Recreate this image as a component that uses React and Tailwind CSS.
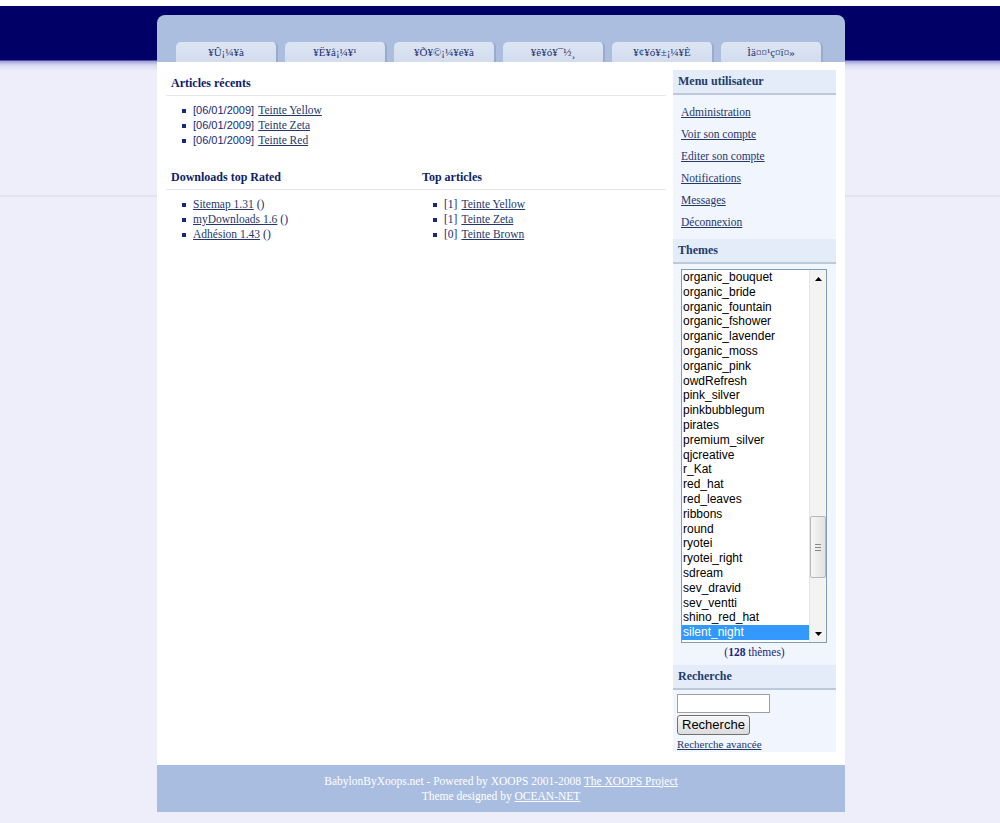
import React from 'react'

const tabs = ['¥Û¡¼¥à', '¥Ë¥å¡¼¥¹', '¥Õ¥©¡¼¥é¥à', '¥ê¥ó¥¯½¸', '¥¢¥ó¥±¡¼¥È', 'Ìä¤¤¹ç¤ï¤»']

const recent = ['Teinte Yellow', 'Teinte Zeta', 'Teinte Red']
const downloads = ['Sitemap 1.31', 'myDownloads 1.6', 'Adhésion 1.43']
const topArticles = [['1', 'Teinte Yellow'], ['1', 'Teinte Zeta'], ['0', 'Teinte Brown']]
const userMenu = ['Administration', 'Voir son compte', 'Editer son compte', 'Notifications', 'Messages', 'Déconnexion']
const themes = [
  'organic_bouquet', 'organic_bride', 'organic_fountain', 'organic_fshower', 'organic_lavender',
  'organic_moss', 'organic_pink', 'owdRefresh', 'pink_silver', 'pinkbubblegum', 'pirates',
  'premium_silver', 'qjcreative', 'r_Kat', 'red_hat', 'red_leaves', 'ribbons', 'round', 'ryotei',
  'ryotei_right', 'sdream', 'sev_dravid', 'sev_ventti', 'shino_red_hat', 'silent_night',
]

const serif = "font-['Liberation_Serif','DejaVu_Serif',serif]"

const Bullet = () => <span className="mr-[7px] inline-block h-[4px] w-[4px] shrink-0 bg-[#1a2878]" />

const BlockTitle = ({ children }) => (
  <div className="border-b border-[#e4e6ea] px-[5px] pb-[4px] pt-[7px] text-[12px] font-bold leading-[16px] text-[#0e1e6a]">{children}</div>
)

const SideTitle = ({ children }) => (
  <div className="border-b-2 border-[#bcc8dc] bg-[#e4ecfa] px-[5px] py-[4px] text-[12px] font-bold leading-[15px] text-[#1f3c6c]">{children}</div>
)

const Scrollbar = () => (
  <div className="flex w-[17px] flex-col border-l border-[#e4e4e4] bg-[#f3f3f1]">
    <div className="flex h-[17px] items-center justify-center">
      <svg width="7" height="4" viewBox="0 0 7 4"><path d="M3.5 0 7 4H0z" fill="#000" /></svg>
    </div>
    <div className="h-[229px]" />
    <div className="flex h-[62px] flex-col items-center justify-center rounded-[2px] border border-[#b8b8b8] bg-[linear-gradient(to_right,#f6f6f6,#e2e2e2)]">
      <div className="h-[1px] w-[6px] bg-[#888]" />
      <div className="mt-[2px] h-[1px] w-[6px] bg-[#888]" />
      <div className="mt-[2px] h-[1px] w-[6px] bg-[#888]" />
    </div>
    <div className="flex-1" />
    <div className="flex h-[17px] items-center justify-center">
      <svg width="7" height="4" viewBox="0 0 7 4"><path d="M0 0h7L3.5 4z" fill="#000" /></svg>
    </div>
  </div>
)

export default function App() {
  return (
    <div className={`min-h-[823px] bg-[linear-gradient(to_bottom,#fff_0,#fff_6px,#000066_6px,#000066_60px,#9e9ed8_61px,#d8d8f2_65px,#eeeefb_71px,#eeeefb_195px,#d6d6e6_196px,#eeeefb_197px,#eeeefb_100%)] ${serif}`}>
      <div className="ml-[157px] w-[688px] pt-[15px]">
        {/* header + tabs */}
        <div className="flex h-[47px] items-end gap-[7px] rounded-t-[8px] bg-[#abbee0] pl-[19px]">
          {tabs.map((t) => (
            <div
              key={t}
              className="flex h-[20px] w-[102px] items-center justify-center rounded-t-[5px] border-r-2 border-[#9aabc8] bg-[linear-gradient(#dde5f2,#d2dced)] text-[11px] text-[#223070]"
            >
              {t}
            </div>
          ))}
        </div>

        {/* body */}
        <div className="flex h-[703px] gap-[7px] bg-white pl-[9px] pr-[9px] pt-[6px]">
          <div className="w-[500px]">
            <BlockTitle>Articles récents</BlockTitle>
            <ul className="pl-[16px] pt-[7px] text-[11.5px] leading-[15px] text-[#1a2878]">
              {recent.map((r) => (
                <li key={r} className="flex items-center">
                  <Bullet />
                  <span className="font-['Liberation_Sans',sans-serif] text-[11px]">[06/01/2009]</span>
                  <a className="ml-[4px] text-[#25386e] underline">{r}</a>
                </li>
              ))}
            </ul>

            <div className="mt-[14px] flex">
              <div className="w-[251px]">
                <BlockTitle>Downloads top Rated</BlockTitle>
                <ul className="pl-[16px] pt-[7px] text-[11.5px] leading-[15px] text-[#1a2878]">
                  {downloads.map((d) => (
                    <li key={d} className="flex items-center">
                      <Bullet />
                      <a className="text-[#25386e] underline">{d}</a>
                      <span className="ml-[3px]">()</span>
                    </li>
                  ))}
                </ul>
              </div>
              <div className="flex-1">
                <BlockTitle>Top articles</BlockTitle>
                <ul className="pl-[16px] pt-[7px] text-[11.5px] leading-[15px] text-[#1a2878]">
                  {topArticles.map(([n, t]) => (
                    <li key={t} className="flex items-center">
                      <Bullet />
                      <span>[{n}]</span>
                      <a className="ml-[4px] text-[#25386e] underline">{t}</a>
                    </li>
                  ))}
                </ul>
              </div>
            </div>
          </div>

          {/* sidebar */}
          <div className="mt-[2px] h-[682px] w-[163px] bg-[#f1f5fd]">
            <SideTitle>Menu utilisateur</SideTitle>
            <div className="flex flex-col gap-[8px] px-[8px] pb-[10px] pt-[10px] text-[11.5px] leading-[14px]">
              {userMenu.map((m) => (
                <a key={m} className="text-[#25386e] underline">{m}</a>
              ))}
            </div>
            <SideTitle>Themes</SideTitle>
            <div className="px-[8px] pt-[5px]">
              <div className="flex h-[374px] w-[146px] border border-[#7f9db9] bg-white">
                <div className="flex-1 overflow-hidden font-['Liberation_Sans',Arial,sans-serif] text-[12px] leading-[14.8px] text-black">
                  {themes.map((t) => (
                    <div
                      key={t}
                      className={t === 'silent_night' ? 'bg-[#3399ff] pl-[1px] text-white' : 'pl-[1px]'}
                    >
                      {t}
                    </div>
                  ))}
                </div>
                <Scrollbar />
              </div>
              <div className="pt-[1px] text-center text-[11.5px] leading-[16px] text-[#1a2878]">
                (<b>128</b> thèmes)
              </div>
            </div>
            <div className="mt-[5px]">
              <SideTitle>Recherche</SideTitle>
            </div>
            <div className="px-[4px] pt-[4px]">
              <input className="block h-[19px] w-[93px] border border-[#a0a0a0] bg-white" />
              <button className="mt-[2px] block h-[20px] rounded-[3px] border border-[#707070] bg-[linear-gradient(#f8f8f8,#dcdcdc)] px-[4px] font-['Liberation_Sans',Arial,sans-serif] text-[13px] leading-[16px] text-black">
                Recherche
              </button>
              <a className="mt-[1px] block text-[11px] leading-[16px] text-[#25386e] underline">Recherche avancée</a>
            </div>
          </div>
        </div>

        {/* footer */}
        <div className="flex h-[47px] flex-col items-center justify-center bg-[#a9bde0] text-[11.5px] leading-[15px] text-white">
          <div>
            BabylonByXoops.net - Powered by XOOPS 2001-2008 <a className="underline">The XOOPS Project</a>
          </div>
          <div>
            Theme designed by <a className="underline">OCEAN-NET</a>
          </div>
        </div>
      </div>
    </div>
  )
}
